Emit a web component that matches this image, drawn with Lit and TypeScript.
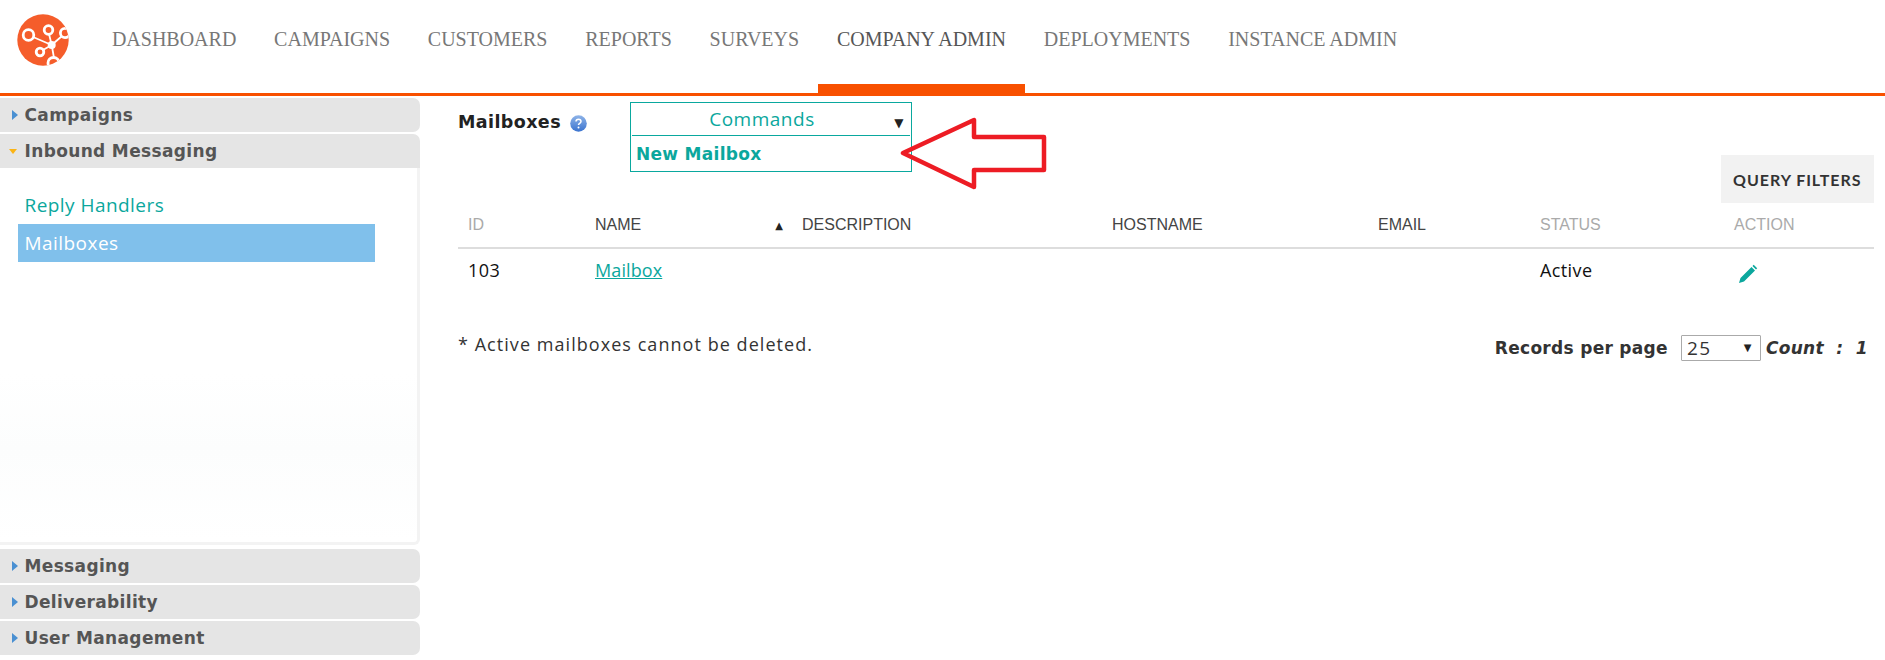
import { LitElement, html, css, svg } from "lit";
import { customElement } from "lit/decorators.js";

const NAV = ["DASHBOARD", "CAMPAIGNS", "CUSTOMERS", "REPORTS", "SURVEYS", "COMPANY ADMIN", "DEPLOYMENTS", "INSTANCE ADMIN"];

const logo = html`<svg class="logo" viewBox="0 0 52 52" width="52" height="52">
  <defs><clipPath id="lc"><circle cx="26" cy="26" r="25.7"/></clipPath></defs>
  <circle cx="26" cy="26" r="25.7" fill="#f55d2b"/>
  <g clip-path="url(#lc)" fill="none" stroke="#fff">
    <path d="M34.7 31 L16 23 M34.7 31 L32 20 M34.700 31 L45 22 M34.700 31 L26 36 M34.700 31 L37 44" stroke-width="1.800"/>
    <circle cx="11.500" cy="21" r="5.300" stroke-width="2.800"/>
    <circle cx="31.500" cy="16" r="4.300" stroke-width="2.800"/>
    <circle cx="48" cy="19" r="4.600" stroke-width="2.800"/>
    <circle cx="23" cy="38" r="3.800" stroke-width="2.800"/>
    <circle cx="36.500" cy="49" r="5.500" stroke-width="2.800"/>
    <circle cx="34.700" cy="31" r="4" fill="#fff" stroke="none"/>
  </g>
</svg>`;

@customElement("app-root")
export class AppRoot extends LitElement {
  static styles = css`
    :host { display: block; width: 1885px; height: 660px; overflow: hidden; position: relative; background: #fff; font-family: "DejaVu Sans", sans-serif; }
    * { box-sizing: border-box; }
    header { height: 96px; border-bottom: 3px solid #f85000; display: flex; align-items: flex-start; }
    .logo { margin: 14px 0 0 17px; flex: none; }
    nav { display: flex; margin-left: 24px; }
    .nav-item { height: 93px; padding: 29px 18.88px 0; font: 20px/20px "Liberation Serif", serif; color: #777; white-space: nowrap; border-bottom: 9px solid transparent; }
    .nav-item.on { color: #555; border-bottom-color: #f85000; }
    .page { display: flex; height: 564px; }
    aside { width: 420px; flex: none; display: flex; flex-direction: column; gap: 2px; padding-top: 2px; }
    .acc { height: 34px; background: #e5e5e5; border-radius: 0 7px 7px 0; display: flex; align-items: center; padding-left: 24.5px; font-size: 17px; font-weight: 700; color: #555; position: relative; letter-spacing: .35px; }
    .acc.open { border-radius: 0 7px 0 0; }
    .tri { position: absolute; left: 12px; top: 12px; width: 0; height: 0; border-top: 5px solid transparent; border-bottom: 5px solid transparent; border-left: 6px solid #4a90d2; }
    .tri.down { left: 9px; top: 15px; border-left: 4.5px solid transparent; border-right: 4.5px solid transparent; border-top: 5px solid #fbb415; border-bottom: 0; }
    .panel { height: 377px; margin-bottom: 2px; margin-top: -2px; border-right: 3px solid #f3f3f3; border-bottom: 3px solid #f3f3f3; border-radius: 0 0 6px 0; padding: 18px 0 0 18px; background: linear-gradient(#fff 55%, #fcfdfd 75%, #fff); }
    .link { font: 19px/38px "Open Sans", sans-serif; letter-spacing: .45px; height: 38px; padding-left: 6.500px; color: #0ba79d; }
    .link.on { width: 357px; color: #fff; background: #80c0eb; }
    main { flex: 1; min-width: 0; position: relative; padding: 0 11px 0 38px; }
    .top { display: flex; height: 59px; align-items: flex-start; }
    h1 { margin: 12px 0 0; font-size: 17.5px; line-height: 28px; font-weight: 700; color: #222; letter-spacing: .4px; }
    .help { margin: 19px 0 0 9px; flex: none; }
    .cmd { margin: 6px 0 0 43px; width: 282px; height: 70px; border: 1px solid #0aa89e; padding: 1px; flex: none; }
    .cmd-h { height: 32px; border-bottom: 1px solid #0aa89e; display: flex; align-items: center; position: relative; justify-content: center; padding: 0 18px 2px 0; color: #0ba79d; font: 19px "Open Sans", sans-serif; letter-spacing: .5px; }
    .caret { position: absolute; right: 6px; top: 11px; font: 12px/16px "DejaVu Sans", sans-serif; color: #222; }
    .cmd-i { padding: 5px 0 0 4px; font-size: 17px; font-weight: 700; color: #0ba79d; letter-spacing: .3px; line-height: 26px; }
    .q { display: flex; justify-content: flex-end; }
    .qbtn { width: 153.500px; height: 48px; background: #f2f2f2; display: flex; align-items: center; justify-content: center; font: 700 16px "Lato", sans-serif; letter-spacing: .95px; color: #333; }
    .row { display: grid; grid-template-columns: 127px 207px 310px 266px 162px 194px 140px; padding-left: 10px; }
    .th { height: 46px; border-bottom: 2px solid #ddd; font: 16px/44px "Liberation Sans", sans-serif; color: #444; }
    .th .g { color: #aaa; }
    .sort { font: 10px "DejaVu Sans", sans-serif; margin-left: 134px; color: #222; vertical-align: 1px; }
    .td { height: 45px; font: 18px/42px "Open Sans", sans-serif; letter-spacing: .4px; color: #111; }
    .td a { color: #0ba79d; text-decoration: underline; letter-spacing: .1px; }
    .pencil { display: block; margin: 15px 0 0 4px; }
    .foot { display: flex; justify-content: space-between; margin-top: 38px; color: #333; }
    .note { font: 18px/24px "Open Sans", sans-serif; letter-spacing: 1.050px; }
    .pager { display: flex; align-items: center; margin: 3px 0 0; font-size: 17px; font-weight: 700; color: #333; padding-right: 6px; letter-spacing: .3px; }
    .sel { width: 80px; height: 26px; border: 1px solid #aaa; border-radius: 1px; margin: 0 5px 0 13px; font: 19px/24px "Open Sans", sans-serif; letter-spacing: 1.500px; padding-left: 5px; position: relative; }
    .sel span { position: absolute; right: 7px; top: 0; font: 10px/24px "DejaVu Sans", sans-serif; color: #222; }
    .count { font-style: italic; white-space: pre; }
    .arrow { position: absolute; left: 0; top: 0; pointer-events: none; }
  `;

  render() {
    return html`
      <header>
        ${logo}
        <nav>${NAV.map((n) => html`<div class="nav-item ${n === "COMPANY ADMIN" ? "on" : ""}">${n}</div>`)}</nav>
      </header>
      <div class="page">
        <aside>
          <div class="acc"><i class="tri"></i>Campaigns</div>
          <div class="acc open"><i class="tri down"></i>Inbound Messaging</div>
          <div class="panel">
            <div class="link">Reply Handlers</div>
            <div class="link on">Mailboxes</div>
          </div>
          <div class="acc"><i class="tri"></i>Messaging</div>
          <div class="acc"><i class="tri"></i>Deliverability</div>
          <div class="acc"><i class="tri"></i>User Management</div>
        </aside>
        <main>
          <div class="top">
            <h1>Mailboxes</h1>
            <svg class="help" width="17" height="17" viewBox="0 0 17 17">
              <defs><linearGradient id="hg" x1="0" y1="0" x2="0" y2="1"><stop offset="0" stop-color="#8fb4e8"/><stop offset="1" stop-color="#3a73cf"/></linearGradient></defs>
              <circle cx="8.500" cy="8.500" r="8.300" fill="url(#hg)"/>
              <path d="M6 6.500c0-3 5-3 5 0 0 1.800-2.500 1.800-2.500 3.500" fill="none" stroke="#fff" stroke-width="1.500"/>
              <circle cx="8.500" cy="12.500" r="1" fill="#fff"/>
            </svg>
            <div class="cmd">
              <div class="cmd-h">Commands<span class="caret">▼</span></div>
              <div class="cmd-i">New Mailbox</div>
            </div>
          </div>
          <div class="q"><div class="qbtn">QUERY FILTERS</div></div>
          <div class="row th">
            <span class="g">ID</span><span>NAME<span class="sort">▲</span></span><span>DESCRIPTION</span><span>HOSTNAME</span><span>EMAIL</span><span class="g">STATUS</span><span class="g">ACTION</span>
          </div>
          <div class="row td">
            <span>103</span><span><a>Mailbox</a></span><span></span><span></span><span></span><span>Active</span>
            <span><svg class="pencil" width="20" height="20" viewBox="0 0 20 20"><path d="M1 19l1.500-5L13.500 3l3.500 3.500L6 17.500z M14.500 2l1.200-1.200 3.500 3.500L18 5.500z" fill="#0ba79d"/></svg></span>
          </div>
          <div class="foot">
            <div class="note">* Active mailboxes cannot be deleted.</div>
            <div class="pager">Records per page<div class="sel">25<span>▼</span></div><span class="count">Count  :  1</span></div>
          </div>
        </main>
      </div>
      <svg class="arrow" width="1885" height="660">
        ${svg`<path d="M903 153 L974 120 V137 H1044 V170 H974 V187 Z" fill="none" stroke="#ed1c24" stroke-width="4.500" stroke-linejoin="round"/>`}
      </svg>
    `;
  }
}
